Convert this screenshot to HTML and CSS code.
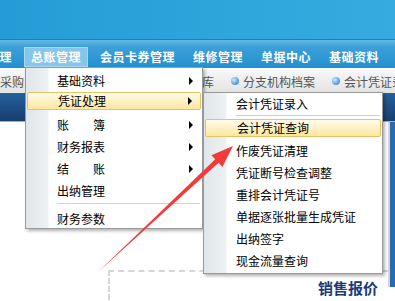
FILE: index.html
```html
<!DOCTYPE html>
<html lang="zh-CN">
<head>
    <meta charset="UTF-8">
    <title>总账管理</title>
    <link rel="stylesheet" href="styles.css">
</head>
<body>
    <div class="page">
        <div class="top"></div>

        <!-- Main navigation -->
        <nav class="nav">
            <span class="nav-item cut">财务管理</span>
            <span class="nav-item active">总账管理</span>
            <span class="nav-item">会员卡券管理</span>
            <span class="nav-item">维修管理</span>
            <span class="nav-item">单据中心</span>
            <span class="nav-item">基础资料</span>
            <span class="nav-item">系统设置</span>
        </nav>

        <!-- Shortcut bar -->
        <div class="subbar">
            <span class="crumb cut"><i class="dot"></i>商品采购</span>
            <span class="crumb"><i class="dot"></i>采购退货出库单</span>
            <span class="crumb"><i class="dot"></i>采购入库</span>
            <span class="crumb"><i class="dot"></i>分支机构档案</span>
            <span class="crumb"><i class="dot"></i>会计凭证录入</span>
        </div>

        <div class="band"></div>

        <div class="content">
            <div class="main">
                <div class="quote-box">
                    <span class="quote-title">销售报价</span>
                </div>
            </div>
            <div class="side"></div>
        </div>

        <!-- Dropdown: 总账管理 -->
        <div class="menu menu-main">
            <div class="item has-sub">基础资料</div>
            <div class="item has-sub on">凭证处理</div>
            <div class="item has-sub">账　　簿</div>
            <div class="item has-sub">财务报表</div>
            <div class="item has-sub">结　　账</div>
            <div class="item">出纳管理</div>
            <div class="sep"></div>
            <div class="item last">财务参数</div>
        </div>

        <!-- Submenu: 凭证处理 -->
        <div class="menu menu-sub">
            <div class="item first">会计凭证录入</div>
            <div class="sep"></div>
            <div class="item on">会计凭证查询</div>
            <div class="item">作废凭证清理</div>
            <div class="item">凭证断号检查调整</div>
            <div class="item">重排会计凭证号</div>
            <div class="item">单据逐张批量生成凭证</div>
            <div class="item">出纳签字</div>
            <div class="item">现金流量查询</div>
        </div>

        <!-- Red pointer arrow -->
        <svg class="pointer" width="395" height="301" viewBox="0 0 395 301">
            <polygon points="97,273 215.2,159.2 211.4,155.2 233,146 222.4,166.9 218.6,162.8" fill="#f23a3a"/>
        </svg>
    </div>
</body>
</html>
```

FILE: styles.css
```css
/* Reset & Base */
body, html {
    margin: 0;
    padding: 0;
}

body {
    font-family: "Noto Sans CJK SC", "DejaVu Sans", sans-serif;
    font-size: 12px;
    color: #000;
}

.page {
    position: relative;
    width: 395px;
    height: 301px;
    overflow: hidden;
    background: #fff;
}

/* Header strip */
.top {
    height: 39px;
    background: linear-gradient(to right, #259cd5, #2ea6dc 60%, #36abdf);
    border-bottom: 1px solid #1b80c0;
}

/* Main navigation */
.nav {
    height: 28px;
    display: flex;
    align-items: flex-end;
    gap: 6px;
    white-space: nowrap;
    background: linear-gradient(to bottom, #63b8e4 0, #3c9fd8 7px, #2290cf 100%);
}

.nav-item {
    height: 20px;
    line-height: 20px;
    padding: 0 6px;
    margin-bottom: 1px;
    color: #fff;
    font-weight: bold;
    letter-spacing: 0.5px;
    box-sizing: border-box;
}

.nav-item.cut {
    margin-left: -44px;
}

.nav-item.active {
    background: #86c6ea;
    border: 1px solid #a9d8f1;
    line-height: 18px;
}

/* Shortcut bar */
.subbar {
    height: 24px;
    display: flex;
    align-items: center;
    gap: 17px;
    white-space: nowrap;
    color: #555;
    background: linear-gradient(to bottom, #f8f8f8, #e3e3e3);
    border-top: 1px solid #fff;
}

.crumb {
    display: flex;
    align-items: center;
}

.crumb.cut {
    margin-left: -36px;
}

.dot {
    width: 8px;
    height: 8px;
    margin-right: 4px;
    border-radius: 50%;
    background: radial-gradient(circle at 35% 35%, #cfe8fa, #4d97d6 70%);
}

/* Dark band under the shortcut bar */
.band {
    height: 28px;
    background: linear-gradient(to bottom, #24609c, #173f70);
    border-bottom: 1px solid #8bb8de;
}

/* Content */
.content {
    display: flex;
    height: 178px;
}

.main {
    flex: 1;
    display: flex;
    padding: 148px 0 0 108px;
}

.quote-box {
    flex: 1;
    display: flex;
    justify-content: flex-end;
    align-items: flex-start;
    padding: 6px 10px 0 0;
    border-top: 2px dashed #d6d6d6;
    border-left: 2px dashed #d6d6d6;
}

.quote-title {
    font-size: 15px;
    font-weight: bold;
    color: #1b3a78;
    line-height: 20px;
}

.side {
    width: 5px;
    height: 165px;
    background: #2f68b2;
    border-left: 2px solid #cfd6dd;
}

/* Dropdown menus */
.menu {
    position: absolute;
    background: linear-gradient(to right, #e1e6ea 0, #eef1f3 22px, #fff 23px);
    border: 1px solid #9a9a9a;
    box-shadow: 2px 2px 3px rgba(0, 0, 0, 0.3);
    white-space: nowrap;
}

.menu-main {
    left: 25px;
    top: 67px;
    width: 176px;
    height: 158px;
    padding-top: 2px;
}

.menu-sub {
    left: 203px;
    top: 92px;
    width: 178px;
    height: 180px;
}

.item {
    position: relative;
    height: 22px;
    line-height: 22px;
    padding-left: 31px;
}

.menu-sub .item {
    padding-left: 32px;
}

.menu-sub .item.first {
    height: 21px;
    line-height: 21px;
}

.item.on {
    height: 18px;
    line-height: 16px;
    margin: 0 1px 4px;
    padding-left: 30px;
    box-sizing: border-box;
    border: 1px solid #e5c363;
    border-radius: 2px;
    background: linear-gradient(to bottom, #fffbea, #fde7a0);
}

.menu-sub .item.on {
    margin: 3px 1px 3px;
    padding-left: 31px;
}

.item.last {
    height: 19px;
}

.item.has-sub::after {
    content: "";
    position: absolute;
    right: 9px;
    top: 50%;
    margin-top: -4px;
    border-left: 4px solid #000;
    border-top: 4px solid transparent;
    border-bottom: 4px solid transparent;
}

.item.on.has-sub::after {
    right: 8px;
}

.sep {
    height: 1px;
    margin: 1px 2px 4px 31px;
    background: #ccd3d9;
}

.menu-sub .sep {
    margin: 1px 2px 0 32px;
}

/* Pointer arrow overlay */
.pointer {
    position: absolute;
    left: 0;
    top: 0;
    pointer-events: none;
}
```
